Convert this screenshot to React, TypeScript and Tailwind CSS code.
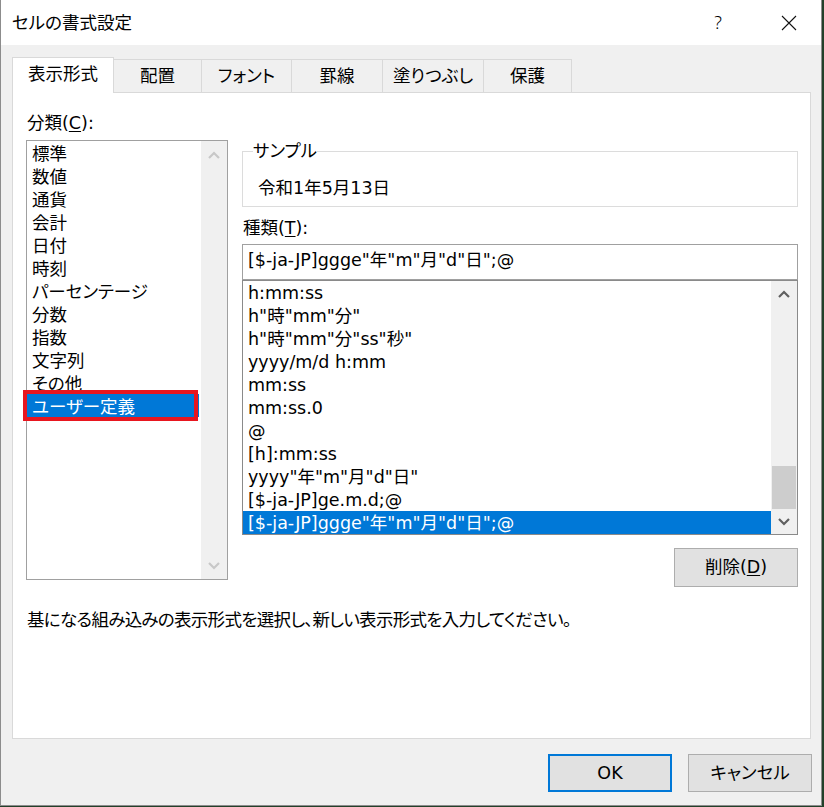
import React from "react";

function Chevron({ up, color }: { up?: boolean; color: string }) {
  return (
    <svg width="12" height="8" viewBox="0 0 12 8">
      <polyline
        points={up ? "1,7 6,2 11,7" : "1,1 6,6 11,1"}
        fill="none"
        stroke={color}
        strokeWidth="2.2"
      />
    </svg>
  );
}

const categories = [
  "標準",
  "数値",
  "通貨",
  "会計",
  "日付",
  "時刻",
  "パーセンテージ",
  "分数",
  "指数",
  "文字列",
  "その他",
  "ユーザー定義",
];

const formats = [
  "h:mm:ss",
  'h"時"mm"分"',
  'h"時"mm"分"ss"秒"',
  "yyyy/m/d h:mm",
  "mm:ss",
  "mm:ss.0",
  "@",
  "[h]:mm:ss",
  'yyyy"年"m"月"d"日"',
  "[$-ja-JP]ge.m.d;@",
  '[$-ja-JP]ggge"年"m"月"d"日";@',
];

const tabs = [
  { label: "配置", w: "w-[88px]" },
  { label: "フォント", w: "w-[90px]" },
  { label: "罫線", w: "w-[91px]" },
  { label: "塗りつぶし", w: "w-[101px]" },
  { label: "保護", w: "w-[88px]" },
];

export default function App() {
  return (
    <div className="w-[824px] h-[807px] bg-[#23402a] overflow-hidden [font-family:'DejaVu_Sans','Noto_Sans_CJK_JP',sans-serif] [font-feature-settings:'palt'] text-[17.5px] text-black">
      <div className="w-[822px] h-[806px] bg-[#f0f0f0] border-l border-r border-b border-[#8c8c8c] flex flex-col">
        {/* Title bar */}
        <div className="h-[45px] bg-white flex items-center pl-[11px] shrink-0">
          <span className="leading-[23px] pt-[1px]">セルの書式設定</span>
          <div className="flex-1" />
          <span className="w-[16px] text-center leading-[23px] font-light [font-family:'Noto_Sans',sans-serif] text-[18px]">?</span>
          <span className="ml-[55px] mr-[24px] flex items-center">
            <svg width="16" height="16" viewBox="0 0 16 16">
              <path d="M1 1 L15 15 M15 1 L1 15" stroke="#111" strokeWidth="1.1" fill="none" />
            </svg>
          </span>
        </div>

        {/* Tabs */}
        <div className="h-[48px] flex items-end pl-[11px] shrink-0">
          <div className="relative z-10 w-[102px] h-[36px] bg-white border-l border-t border-r border-[#d9d9d9] flex items-center justify-center pb-[2px]">
            表示形式
          </div>
          {tabs.map((t) => (
            <div
              key={t.label}
              className={`${t.w} h-[34px] border-t border-r border-[#d9d9d9] bg-[#f0f0f0] flex items-center justify-center`}
            >
              {t.label}
            </div>
          ))}
        </div>

        {/* Panel */}
        <div className="-mt-px ml-[11px] w-[799px] h-[647px] bg-white border border-[#d9d9d9] pl-[13px] shrink-0">
          <div className="flex items-start gap-[14px]">
            {/* Left column */}
            <div className="w-[202px] pt-[18px] flex flex-col">
              <div className="h-[23px] leading-[23px] pl-px pt-px">
                分類(<span className="underline underline-offset-2">C</span>):
              </div>
              <div className="relative mt-[6px] h-[440px] border border-[#a0a0a0] flex">
                <div className="flex-1 flex flex-col">
                  {categories.map((c, i) => (
                    <div
                      key={c}
                      className={
                        i === categories.length - 1
                          ? "h-[23px] pt-[4px] leading-[19px] pl-[5px] mr-[2px] bg-[#0078d7] text-white"
                          : "h-[23px] pt-[4px] leading-[19px] pl-[5px]"
                      }
                    >
                      {c}
                    </div>
                  ))}
                </div>
                <div className="w-[26px] bg-[#f0f0f0] flex flex-col">
                  <div className="h-[26px] flex items-center justify-center pt-[2px]">
                    <Chevron up color="#c8c8c8" />
                  </div>
                  <div className="flex-1" />
                  <div className="h-[26px] flex items-center justify-center">
                    <Chevron color="#c8c8c8" />
                  </div>
                </div>
                <div className="absolute left-[-4px] top-[249px] w-[175px] h-[31px] border-[4px] border-[#e8161f]" />
              </div>
            </div>

            {/* Right column */}
            <div className="w-[556px] pt-[48px] flex flex-col">
              <fieldset className="border border-[#dcdcdc] pl-[10px] pb-[6px] min-w-0">
                <legend className="leading-[20px] px-0">サンプル</legend>
                <div className="pl-[5px] pt-[16px] h-[23px] leading-[23px] box-content">令和1年5月13日</div>
              </fieldset>
              <div className="mt-[10px] h-[23px] leading-[23px] pl-px">
                種類(<span className="underline underline-offset-2">T</span>):
              </div>
              <div className="mt-[4px] h-[36px] border border-[#a0a0a0] flex items-center pl-[5px] pb-[3px]">
                {'[$-ja-JP]ggge"年"m"月"d"日";@'}
              </div>
              <div className="h-[255px] border border-[#8a8a8a] flex">
                <div className="flex-1 flex flex-col">
                  {formats.map((f, i) => (
                    <div
                      key={f}
                      className={
                        i === formats.length - 1
                          ? "h-[23px] pt-[2px] leading-[21px] pl-[5px] bg-[#0078d7] text-white whitespace-nowrap"
                          : "h-[23px] pt-[2px] leading-[21px] pl-[5px] whitespace-nowrap"
                      }
                    >
                      {f}
                    </div>
                  ))}
                </div>
                <div className="w-[26px] bg-[#f0f0f0] flex flex-col">
                  <div className="h-[26px] flex items-center justify-center">
                    <Chevron up color="#606060" />
                  </div>
                  <div className="flex-1 flex flex-col justify-end">
                    <div className="h-[43px] mx-px bg-[#cdcdcd]" />
                  </div>
                  <div className="h-[25px] flex items-center justify-center">
                    <Chevron color="#606060" />
                  </div>
                </div>
              </div>
              <div className="mt-[13px] flex justify-end">
                <div className="w-[124px] h-[39px] bg-[#e1e1e1] border border-[#adadad] flex items-center justify-center">
                  削除(<span className="underline underline-offset-2">D</span>)
                </div>
              </div>
            </div>
          </div>
          <div className="mt-[22px] h-[23px] leading-[23px] pl-px tracking-[-0.7px]">
            基になる組み込みの表示形式を選択し、新しい表示形式を入力してください。
          </div>
        </div>

        {/* Bottom buttons */}
        <div className="mt-[15px] flex justify-end gap-[16px] pr-[9px]">
          <div className="w-[124px] h-[38px] bg-[#e1e1e1] border-2 border-[#0078d7] flex items-center justify-center">
            OK
          </div>
          <div className="w-[124px] h-[38px] bg-[#e1e1e1] border border-[#adadad] flex items-center justify-center">
            キャンセル
          </div>
        </div>
      </div>
    </div>
  );
}
